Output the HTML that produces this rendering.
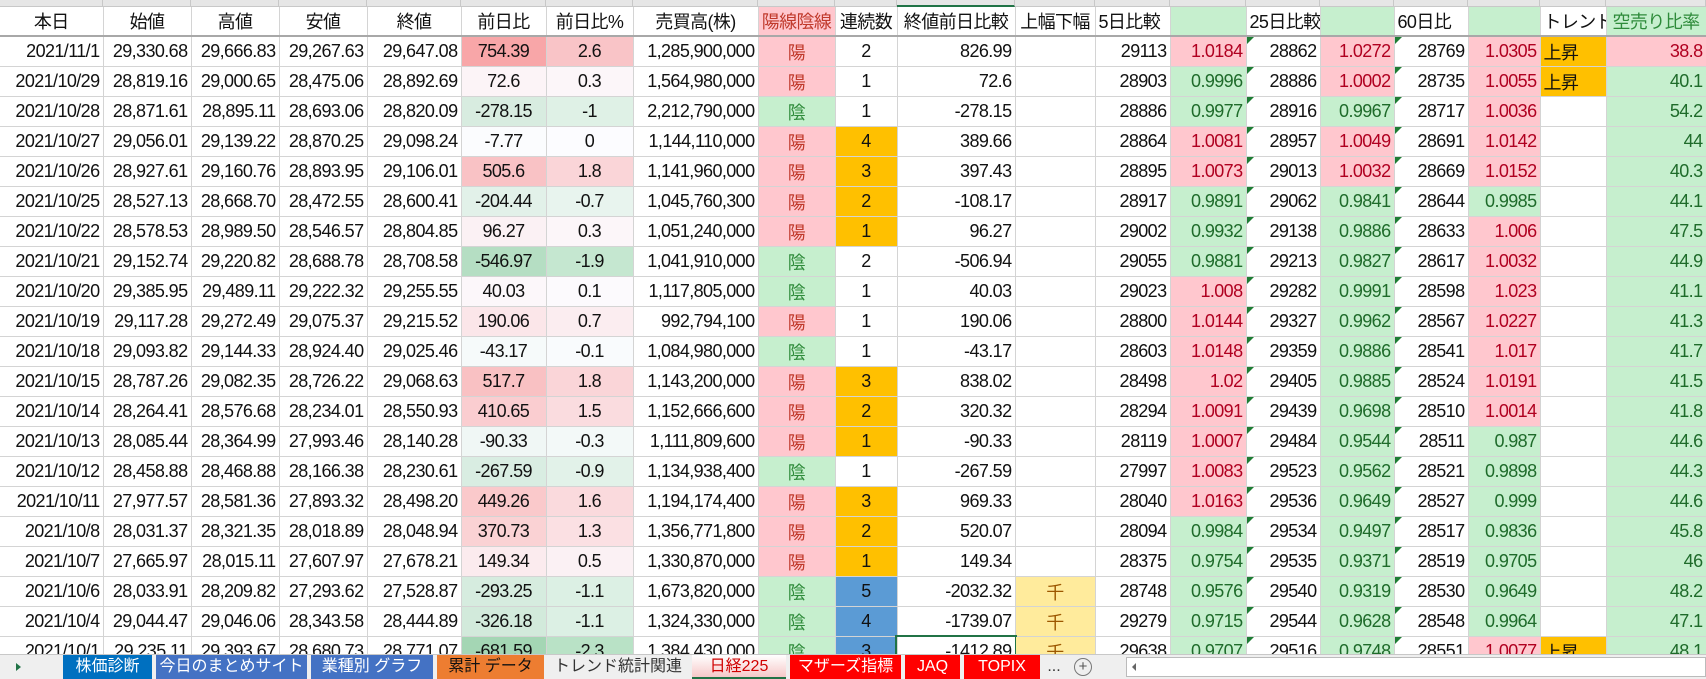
<!DOCTYPE html>
<html><head><meta charset="utf-8">
<style>
body{margin:0;width:1706px;height:679px;overflow:hidden;background:#fff;font-family:"Liberation Sans","Noto Sans CJK JP",sans-serif;}
#colh{position:absolute;top:0;left:0;height:7px;width:1706px;background:#e6e6e6;display:flex;border-bottom:1px solid #c8c8c8;box-sizing:border-box}
#colh div{height:7px;border-right:1px solid #c8c8c8;box-sizing:border-box}
table{position:absolute;top:7px;left:0;border-collapse:collapse;table-layout:fixed;width:1706px}
td{height:29px;border-right:1px solid #d4d4d4;border-bottom:1px solid #d4d4d4;font-size:18px;letter-spacing:-0.6px;padding:0 3px;white-space:nowrap;overflow:hidden;text-align:right;color:#111;position:relative}
tr.h td{text-align:center;border-bottom:2px solid #a8a8a8;height:28px}
td.c{text-align:center}
td.l{text-align:left}
.tri::before{content:"";position:absolute;left:0;top:0;border-top:7px solid #1e7d34;border-right:7px solid transparent}
#tabs{position:absolute;top:654px;left:0;width:1706px;height:25px;background:#efefef;border-top:1px solid #c8c8c8;box-sizing:border-box;font-size:16px}
#tabs div.t{position:absolute;top:0;height:24px;line-height:23px;text-align:center;color:#fff;white-space:nowrap;overflow:hidden}
</style></head><body>
<div id="colh">
<div style="width:103px"></div><div style="width:88px"></div><div style="width:88px"></div><div style="width:88px"></div><div style="width:94px"></div><div style="width:85px"></div><div style="width:87px"></div><div style="width:125px"></div><div style="width:77px"></div><div style="width:62px"></div><div style="width:118px;border-bottom:2px solid #217346"></div><div style="width:80px"></div><div style="width:75px"></div><div style="width:76px"></div><div style="width:74px"></div><div style="width:74px"></div><div style="width:74px"></div><div style="width:72px"></div><div style="width:66px"></div><div style="width:100px"></div>
</div>
<table id="t">
<colgroup><col style="width:103px"><col style="width:88px"><col style="width:88px"><col style="width:88px"><col style="width:94px"><col style="width:85px"><col style="width:87px"><col style="width:125px"><col style="width:77px"><col style="width:62px"><col style="width:118px"><col style="width:80px"><col style="width:75px"><col style="width:76px"><col style="width:74px"><col style="width:74px"><col style="width:74px"><col style="width:72px"><col style="width:66px"><col style="width:100px"></colgroup>
<tr class="h"><td>本日</td><td>始値</td><td>高値</td><td>安値</td><td>終値</td><td>前日比</td><td>前日比%</td><td>売買高(株)</td><td style="background:#ffc7ce;color:#c0392b">陽線陰線</td><td>連続数</td><td>終値前日比較</td><td>上幅下幅</td><td style="text-align:left">5日比較</td><td style="background:#c6efce"></td><td style="text-align:left">25日比較</td><td style="background:#c6efce"></td><td style="text-align:left">60日比</td><td style="background:#c6efce"></td><td style="text-align:left">トレンド</td><td style="background:#c6efce;color:#2e8b3a">空売り比率</td></tr>
<tr><td>2021/11/1</td><td>29,330.68</td><td>29,666.83</td><td>29,267.63</td><td>29,647.08</td><td>754.39</td><td>2.6</td><td>1,285,900,000</td><td>陽</td><td>2</td><td>826.99</td><td></td><td>29113</td><td>1.0184</td><td>28862</td><td>1.0272</td><td>28769</td><td>1.0305</td><td>上昇</td><td>38.8</td></tr>
<tr><td>2021/10/29</td><td>28,819.16</td><td>29,000.65</td><td>28,475.06</td><td>28,892.69</td><td>72.6</td><td>0.3</td><td>1,564,980,000</td><td>陽</td><td>1</td><td>72.6</td><td></td><td>28903</td><td>0.9996</td><td>28886</td><td>1.0002</td><td>28735</td><td>1.0055</td><td>上昇</td><td>40.1</td></tr>
<tr><td>2021/10/28</td><td>28,871.61</td><td>28,895.11</td><td>28,693.06</td><td>28,820.09</td><td>-278.15</td><td>-1</td><td>2,212,790,000</td><td>陰</td><td>1</td><td>-278.15</td><td></td><td>28886</td><td>0.9977</td><td>28916</td><td>0.9967</td><td>28717</td><td>1.0036</td><td></td><td>54.2</td></tr>
<tr><td>2021/10/27</td><td>29,056.01</td><td>29,139.22</td><td>28,870.25</td><td>29,098.24</td><td>-7.77</td><td>0</td><td>1,144,110,000</td><td>陽</td><td>4</td><td>389.66</td><td></td><td>28864</td><td>1.0081</td><td>28957</td><td>1.0049</td><td>28691</td><td>1.0142</td><td></td><td>44</td></tr>
<tr><td>2021/10/26</td><td>28,927.61</td><td>29,160.76</td><td>28,893.95</td><td>29,106.01</td><td>505.6</td><td>1.8</td><td>1,141,960,000</td><td>陽</td><td>3</td><td>397.43</td><td></td><td>28895</td><td>1.0073</td><td>29013</td><td>1.0032</td><td>28669</td><td>1.0152</td><td></td><td>40.3</td></tr>
<tr><td>2021/10/25</td><td>28,527.13</td><td>28,668.70</td><td>28,472.55</td><td>28,600.41</td><td>-204.44</td><td>-0.7</td><td>1,045,760,300</td><td>陽</td><td>2</td><td>-108.17</td><td></td><td>28917</td><td>0.9891</td><td>29062</td><td>0.9841</td><td>28644</td><td>0.9985</td><td></td><td>44.1</td></tr>
<tr><td>2021/10/22</td><td>28,578.53</td><td>28,989.50</td><td>28,546.57</td><td>28,804.85</td><td>96.27</td><td>0.3</td><td>1,051,240,000</td><td>陽</td><td>1</td><td>96.27</td><td></td><td>29002</td><td>0.9932</td><td>29138</td><td>0.9886</td><td>28633</td><td>1.006</td><td></td><td>47.5</td></tr>
<tr><td>2021/10/21</td><td>29,152.74</td><td>29,220.82</td><td>28,688.78</td><td>28,708.58</td><td>-546.97</td><td>-1.9</td><td>1,041,910,000</td><td>陰</td><td>2</td><td>-506.94</td><td></td><td>29055</td><td>0.9881</td><td>29213</td><td>0.9827</td><td>28617</td><td>1.0032</td><td></td><td>44.9</td></tr>
<tr><td>2021/10/20</td><td>29,385.95</td><td>29,489.11</td><td>29,222.32</td><td>29,255.55</td><td>40.03</td><td>0.1</td><td>1,117,805,000</td><td>陰</td><td>1</td><td>40.03</td><td></td><td>29023</td><td>1.008</td><td>29282</td><td>0.9991</td><td>28598</td><td>1.023</td><td></td><td>41.1</td></tr>
<tr><td>2021/10/19</td><td>29,117.28</td><td>29,272.49</td><td>29,075.37</td><td>29,215.52</td><td>190.06</td><td>0.7</td><td>992,794,100</td><td>陽</td><td>1</td><td>190.06</td><td></td><td>28800</td><td>1.0144</td><td>29327</td><td>0.9962</td><td>28567</td><td>1.0227</td><td></td><td>41.3</td></tr>
<tr><td>2021/10/18</td><td>29,093.82</td><td>29,144.33</td><td>28,924.40</td><td>29,025.46</td><td>-43.17</td><td>-0.1</td><td>1,084,980,000</td><td>陰</td><td>1</td><td>-43.17</td><td></td><td>28603</td><td>1.0148</td><td>29359</td><td>0.9886</td><td>28541</td><td>1.017</td><td></td><td>41.7</td></tr>
<tr><td>2021/10/15</td><td>28,787.26</td><td>29,082.35</td><td>28,726.22</td><td>29,068.63</td><td>517.7</td><td>1.8</td><td>1,143,200,000</td><td>陽</td><td>3</td><td>838.02</td><td></td><td>28498</td><td>1.02</td><td>29405</td><td>0.9885</td><td>28524</td><td>1.0191</td><td></td><td>41.5</td></tr>
<tr><td>2021/10/14</td><td>28,264.41</td><td>28,576.68</td><td>28,234.01</td><td>28,550.93</td><td>410.65</td><td>1.5</td><td>1,152,666,600</td><td>陽</td><td>2</td><td>320.32</td><td></td><td>28294</td><td>1.0091</td><td>29439</td><td>0.9698</td><td>28510</td><td>1.0014</td><td></td><td>41.8</td></tr>
<tr><td>2021/10/13</td><td>28,085.44</td><td>28,364.99</td><td>27,993.46</td><td>28,140.28</td><td>-90.33</td><td>-0.3</td><td>1,111,809,600</td><td>陽</td><td>1</td><td>-90.33</td><td></td><td>28119</td><td>1.0007</td><td>29484</td><td>0.9544</td><td>28511</td><td>0.987</td><td></td><td>44.6</td></tr>
<tr><td>2021/10/12</td><td>28,458.88</td><td>28,468.88</td><td>28,166.38</td><td>28,230.61</td><td>-267.59</td><td>-0.9</td><td>1,134,938,400</td><td>陰</td><td>1</td><td>-267.59</td><td></td><td>27997</td><td>1.0083</td><td>29523</td><td>0.9562</td><td>28521</td><td>0.9898</td><td></td><td>44.3</td></tr>
<tr><td>2021/10/11</td><td>27,977.57</td><td>28,581.36</td><td>27,893.32</td><td>28,498.20</td><td>449.26</td><td>1.6</td><td>1,194,174,400</td><td>陽</td><td>3</td><td>969.33</td><td></td><td>28040</td><td>1.0163</td><td>29536</td><td>0.9649</td><td>28527</td><td>0.999</td><td></td><td>44.6</td></tr>
<tr><td>2021/10/8</td><td>28,031.37</td><td>28,321.35</td><td>28,018.89</td><td>28,048.94</td><td>370.73</td><td>1.3</td><td>1,356,771,800</td><td>陽</td><td>2</td><td>520.07</td><td></td><td>28094</td><td>0.9984</td><td>29534</td><td>0.9497</td><td>28517</td><td>0.9836</td><td></td><td>45.8</td></tr>
<tr><td>2021/10/7</td><td>27,665.97</td><td>28,015.11</td><td>27,607.97</td><td>27,678.21</td><td>149.34</td><td>0.5</td><td>1,330,870,000</td><td>陽</td><td>1</td><td>149.34</td><td></td><td>28375</td><td>0.9754</td><td>29535</td><td>0.9371</td><td>28519</td><td>0.9705</td><td></td><td>46</td></tr>
<tr><td>2021/10/6</td><td>28,033.91</td><td>28,209.82</td><td>27,293.62</td><td>27,528.87</td><td>-293.25</td><td>-1.1</td><td>1,673,820,000</td><td>陰</td><td>5</td><td>-2032.32</td><td>千</td><td>28748</td><td>0.9576</td><td>29540</td><td>0.9319</td><td>28530</td><td>0.9649</td><td></td><td>48.2</td></tr>
<tr><td>2021/10/4</td><td>29,044.47</td><td>29,046.06</td><td>28,343.58</td><td>28,444.89</td><td>-326.18</td><td>-1.1</td><td>1,324,330,000</td><td>陰</td><td>4</td><td>-1739.07</td><td>千</td><td>29279</td><td>0.9715</td><td>29544</td><td>0.9628</td><td>28548</td><td>0.9964</td><td></td><td>47.1</td></tr>
<tr><td>2021/10/1</td><td>29,235.11</td><td>29,393.67</td><td>28,680.73</td><td>28,771.07</td><td>-681.59</td><td>-2.3</td><td>1,384,430,000</td><td>陰</td><td>3</td><td>-1412.89</td><td>千</td><td>29638</td><td>0.9707</td><td>29516</td><td>0.9748</td><td>28551</td><td>1.0077</td><td>上昇</td><td>48.1</td></tr>
</table>
<div id="tabs">
<div style="position:absolute;left:16px;top:8px;border-left:5px solid #217346;border-top:4px solid transparent;border-bottom:4px solid transparent"></div>
<div class="t" style="left:63px;width:89px;background:#0070c0">株価診断</div>
<div class="t" style="left:156px;width:151px;background:#4472c4">今日のまとめサイト</div>
<div class="t" style="left:311px;width:122px;background:#4472c4">業種別 グラフ</div>
<div class="t" style="left:437px;width:107px;background:#ed7d31;color:#111">累計 データ</div>
<div class="t" style="left:548px;width:140px;background:#efefef;color:#333">トレンド統計関連</div>
<div class="t" style="left:692px;width:94px;background:linear-gradient(#fff,#f6c8c8);color:#d00000;border-bottom:2px solid #217346;height:22px">日経225</div>
<div class="t" style="left:790px;width:111px;background:#ff0000">マザーズ指標</div>
<div class="t" style="left:905px;width:55px;background:#ff0000">JAQ</div>
<div class="t" style="left:964px;width:76px;background:#ff0000">TOPIX</div>
<div class="t" style="left:1044px;width:20px;color:#333">...</div>
<div style="position:absolute;left:1074px;top:3px;width:16px;height:16px;border:1px solid #777;border-radius:50%;text-align:center;line-height:16px;font-size:15px;color:#555">+</div>
<div style="position:absolute;left:1126px;top:2px;width:580px;height:20px;background:#fff;border:1px solid #bbb;box-sizing:border-box"></div>
<div style="position:absolute;left:1132px;top:8px;border-right:4px solid #666;border-top:4px solid transparent;border-bottom:4px solid transparent"></div>
</div>
<script>
var rows=document.getElementById('t').rows;
function mix(a,b,t){return 'rgb('+a.map(function(v,i){return Math.round(v+(b[i]-v)*t)}).join(',')+')';}
var W=[252,252,255];
var orange=[3,4,5,6,11,12,13,15,16,17],blue=[18,19,20];
for(var r=1;r<rows.length;r++){
 var c=rows[r].cells,i=r-1;
 c[5].className='c';c[6].className='c';c[8].className='c';c[9].className='c';c[11].className='c';c[18].className='l';
 var v=parseFloat(c[5].textContent);
 c[5].style.background=v>=0?mix(W,[248,166,168],v/754.39):mix(W,[164,214,180],-v/681.59);
 var p=parseFloat(c[6].textContent);
 c[6].style.background=p>=0?mix(W,[249,196,199],p/2.6):mix(W,[185,226,198],-p/2.3);
 if(c[8].textContent=='陽'){c[8].style.background='#ffc7ce';c[8].style.color='#c0392b';}
 else{c[8].style.background='#c6efce';c[8].style.color='#2e8b3a';}
 if(orange.indexOf(i)>=0)c[9].style.background='#ffc000';
 if(blue.indexOf(i)>=0)c[9].style.background='#5b9bd5';
 if(c[11].textContent=='千'){c[11].style.background='#ffeb9c';c[11].style.color='#9c5700';}
 [13,15,17].forEach(function(k){var x=parseFloat(c[k].textContent);
  if(x>=1){c[k].style.background='#ffc7ce';c[k].style.color='#b00020';}else{c[k].style.background='#c6efce';c[k].style.color='#1e6b2a';}});
 c[14].classList.add('tri');c[16].classList.add('tri');
 if(c[18].textContent=='上昇')c[18].style.background='#ffc000';
 if(i==0){c[19].style.background='#ffc7ce';c[19].style.color='#b00020';}else{c[19].style.background='#c6efce';c[19].style.color='#1e6b2a';}
 if(i==20)c[10].style.outline='2px solid #217346';
}
</script>
</body></html>
